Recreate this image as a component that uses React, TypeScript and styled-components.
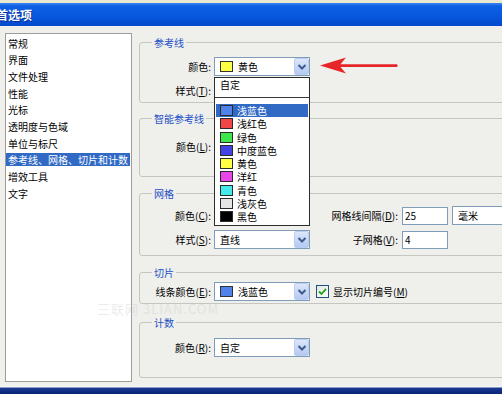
import React from 'react';
import styled, { createGlobalStyle } from 'styled-components';

const panelBg = '#efefec';

const GlobalStyle = createGlobalStyle`
  html, body {
    margin: 0;
    padding: 0;
  }
  body {
    background: ${panelBg};
    font-family: "Noto Sans CJK SC", "Noto Sans", sans-serif;
    font-size: 10px;
    color: #000;
  }
`;

const categories = [
  '常规',
  '界面',
  '文件处理',
  '性能',
  '光标',
  '透明度与色域',
  '单位与标尺',
  '参考线、网格、切片和计数',
  '增效工具',
  '文字',
];

const colorChoices = [
  { name: '浅蓝色', color: '#4f83ea' },
  { name: '浅红色', color: '#f04646' },
  { name: '绿色', color: '#3fe64a' },
  { name: '中度蓝色', color: '#4242e4' },
  { name: '黄色', color: '#ffff44' },
  { name: '洋红', color: '#e846e8' },
  { name: '青色', color: '#44eaea' },
  { name: '浅灰色', color: '#e6e6e6' },
  { name: '黑色', color: '#000000' },
];

const Chevron = () => (
  <svg width="10" height="8" viewBox="0 0 10 8">
    <path d="M1.5 2 L5 5.5 L8.5 2" fill="none" stroke="#3f5a8c" strokeWidth="2" />
  </svg>
);

// combos that sit under the open list are drawn empty: the list hides them
const Select: React.FC<{ swatch?: string; children?: React.ReactNode; width?: number }> = ({
  swatch,
  children,
  width,
}) => (
  <Combo $width={width ?? 96}>
    {swatch && <Swatch $color={swatch} />}
    <ComboText>{children}</ComboText>
    <DropButton>
      <Chevron />
    </DropButton>
  </Combo>
);

const App: React.FC = () => {
  return (
    <Window>
      <GlobalStyle />
      <TopEdge />
      <TitleBar>
        <Title>首选项</Title>
      </TitleBar>
      <Body>
        <CategoryList>
          {categories.map((c, i) => (
            <CategoryItem key={c}>
              <CategoryText $selected={i === 7}>{c}</CategoryText>
            </CategoryItem>
          ))}
        </CategoryList>

        <Panel>
          <Group $height={61} $pad={14} $gap={0}>
            <GroupTitle>参考线</GroupTitle>
            <Row>
              <FieldLabel>颜色:</FieldLabel>
              <ComboWrap>
                <Select swatch="#ffff44">黄色</Select>
                <Popup>
                  <CustomRow>自定</CustomRow>
                  <PopupSeparator />
                  {colorChoices.map((c, i) => (
                    <ChoiceRow key={c.name} $active={i === 0}>
                      <ChoiceSwatch $color={c.color} />
                      {c.name}
                    </ChoiceRow>
                  ))}
                </Popup>
              </ComboWrap>
            </Row>
            <Row>
              <FieldLabel>
                样式(<u>T</u>):
              </FieldLabel>
              <Select />
            </Row>
          </Group>

          <Group $height={59} $pad={18} $gap={15}>
            <GroupTitle>智能参考线</GroupTitle>
            <Row>
              <FieldLabel>
                颜色(<u>L</u>):
              </FieldLabel>
              <Select />
            </Row>
          </Group>

          <Group $height={63} $pad={12} $gap={16}>
            <GroupTitle>网格</GroupTitle>
            <Row>
              <FieldLabel>
                颜色(<u>C</u>):
              </FieldLabel>
              <Select />
              <SideLabel>
                网格线间隔(<u>D</u>):
              </SideLabel>
              <TextBox>25</TextBox>
              <Select width={70}>毫米</Select>
            </Row>
            <Row>
              <FieldLabel>
                样式(<u>S</u>):
              </FieldLabel>
              <Select>直线</Select>
              <SideLabel>
                子网格(<u>V</u>):
              </SideLabel>
              <TextBox>4</TextBox>
            </Row>
          </Group>

          <Group $height={32} $pad={9} $gap={16}>
            <GroupTitle>切片</GroupTitle>
            <Row>
              <FieldLabel>
                线条颜色(<u>E</u>):
              </FieldLabel>
              <Select swatch="#4f83ea">浅蓝色</Select>
              <CheckBox>
                <svg width="11" height="11" viewBox="0 0 11 11">
                  <path d="M2 5.5 L4.5 8 L9 2.8" fill="none" stroke="#22a322" strokeWidth="1.8" />
                </svg>
              </CheckBox>
              <CheckLabel>
                显示切片编号(<u>M</u>)
              </CheckLabel>
            </Row>
          </Group>

          <Group $height={56} $pad={15} $gap={18}>
            <GroupTitle>计数</GroupTitle>
            <Row>
              <FieldLabel>
                颜色(<u>R</u>):
              </FieldLabel>
              <Select>自定</Select>
            </Row>
          </Group>
        </Panel>
      </Body>
      <BottomFrame />

      <Arrow width="82" height="20" viewBox="0 0 82 20">
        <path
          d="M2 9.5 L28 1.5 L22.5 8.2 L79 8.2 Q80.5 9.5 79 10.9 L22.5 10.9 L28 17.5 Z"
          fill="#e8262a"
        />
      </Arrow>
      <Watermark>三联网 3LIAN.COM</Watermark>
    </Window>
  );
};

const Window = styled.div`
  position: relative;
  width: 502px;
  height: 394px;
  overflow: hidden;
  display: flex;
  flex-direction: column;
  background: ${panelBg};
`;

const TopEdge = styled.div`
  height: 3px;
  background: #e9e7cf;
`;

const TitleBar = styled.div`
  height: 23px;
  display: flex;
  align-items: center;
  background: linear-gradient(#3a86f3 0, #0d60e4 3px, #0858de 55%, #0049cc 100%);
`;

const Title = styled.span`
  margin-left: -4px;
  color: #fff;
  font-size: 12px;
  font-weight: 700;
  text-shadow: 1px 1px 0 #0b2f94;
`;

const Body = styled.div`
  flex: 1;
  display: flex;
  align-items: flex-start;
  padding: 7px 0 0 5px;
`;

const CategoryList = styled.ul`
  list-style: none;
  margin: 0;
  padding: 1px 1px 0 0;
  width: 127px;
  height: 349px;
  box-sizing: border-box;
  background: #fff;
  border: 1px solid #9d9d9d;
  flex-shrink: 0;
`;

const CategoryItem = styled.li`
  height: 16.67px;
  display: flex;
  align-items: center;
`;

const CategoryText = styled.span<{ $selected?: boolean }>`
  display: block;
  width: 100%;
  line-height: 13px;
  padding-left: 2px;
  white-space: nowrap;
  background: ${p => (p.$selected ? '#316ac5' : 'transparent')};
  color: ${p => (p.$selected ? '#fff' : '#000')};
`;

const Panel = styled.div`
  flex: 1;
  margin-left: 7px;
  margin-right: -40px;
  padding-top: 9px;
  display: flex;
  flex-direction: column;
`;

const Group = styled.div<{ $height: number; $pad: number; $gap: number }>`
  position: relative;
  box-sizing: border-box;
  height: ${p => p.$height}px;
  margin-top: ${p => p.$gap}px;
  padding-top: ${p => p.$pad}px;
  border: 1px solid #c5c5c1;
  border-radius: 3px;
  display: flex;
  flex-direction: column;
  gap: 5px;
`;

const GroupTitle = styled.span`
  position: absolute;
  top: -7px;
  left: 12px;
  padding: 0 2px;
  line-height: 13px;
  background: ${panelBg};
  color: #1d4fc6;
`;

const Row = styled.div`
  display: flex;
  align-items: center;
  height: 19px;
`;

const FieldLabel = styled.span`
  width: 71px;
  margin-right: 3px;
  text-align: right;
  white-space: nowrap;
  flex-shrink: 0;
`;

const SideLabel = styled.span`
  width: 88px;
  margin-right: 4px;
  text-align: right;
  white-space: nowrap;
  flex-shrink: 0;
`;

const ComboWrap = styled.div`
  position: relative;
`;

const Combo = styled.div<{ $width: number }>`
  width: ${p => p.$width}px;
  height: 19px;
  box-sizing: border-box;
  border: 1px solid #7f9db9;
  background: #fff;
  display: flex;
  align-items: center;
  padding-left: 5px;
  flex-shrink: 0;
`;

const Swatch = styled.span<{ $color: string }>`
  width: 13px;
  height: 11px;
  box-sizing: border-box;
  border: 1px solid #333;
  background: ${p => p.$color};
  margin-right: 5px;
  flex-shrink: 0;
`;

const ComboText = styled.span`
  flex: 1;
  white-space: nowrap;
`;

const DropButton = styled.span`
  width: 15px;
  height: 17px;
  box-sizing: border-box;
  border: 1px solid #bccdf2;
  border-radius: 2px;
  background: linear-gradient(#dce6fb, #b6c9f3);
  display: flex;
  align-items: center;
  justify-content: center;
  flex-shrink: 0;
`;

const TextBox = styled.div`
  width: 46px;
  height: 18px;
  box-sizing: border-box;
  border: 1px solid #7f9db9;
  background: #fff;
  padding-left: 2px;
  margin-right: 4px;
  line-height: 16px;
  flex-shrink: 0;
`;

const CheckBox = styled.span`
  width: 13px;
  height: 13px;
  box-sizing: border-box;
  margin-left: 6px;
  border: 1px solid #1c5180;
  background: linear-gradient(135deg, #e4e4dd, #fff);
  display: flex;
  align-items: center;
  justify-content: center;
  flex-shrink: 0;
`;

const CheckLabel = styled.span`
  margin-left: 4px;
  white-space: nowrap;
`;

const Popup = styled.div`
  position: absolute;
  top: 20px;
  left: 0;
  z-index: 5;
  width: 96px;
  box-sizing: border-box;
  border: 1px solid #2d2d2d;
  background: #fff;
  padding-bottom: 2px;
`;

const CustomRow = styled.div`
  height: 14px;
  line-height: 14px;
  padding-left: 5px;
`;

const PopupSeparator = styled.div`
  margin: 5px 0 6px;
  height: 1px;
  background: #3a3a3a;
`;

const ChoiceRow = styled.div<{ $active?: boolean }>`
  height: 13.25px;
  display: flex;
  align-items: center;
  margin: 0 1px;
  padding-left: 4px;
  white-space: nowrap;
  background: ${p => (p.$active ? '#316ac5' : 'transparent')};
  color: ${p => (p.$active ? '#fff' : '#000')};
`;

const ChoiceSwatch = styled.span<{ $color: string }>`
  width: 13px;
  height: 11px;
  box-sizing: border-box;
  border: 1px solid #2a2a2a;
  background: ${p => p.$color};
  margin-right: 4px;
  flex-shrink: 0;
`;

const BottomFrame = styled.div`
  height: 8px;
  background: linear-gradient(#f7f7f4 0, #f7f7f4 1px, #1b3a94 2px, #0a2474 100%);
`;

const Arrow = styled.svg`
  position: absolute;
  left: 318px;
  top: 56px;
`;

const Watermark = styled.span`
  position: absolute;
  left: 97px;
  top: 302px;
  font-size: 13px;
  line-height: 13px;
  letter-spacing: 1px;
  color: rgba(200, 200, 200, 0.35);
  pointer-events: none;
`;

export default App;
